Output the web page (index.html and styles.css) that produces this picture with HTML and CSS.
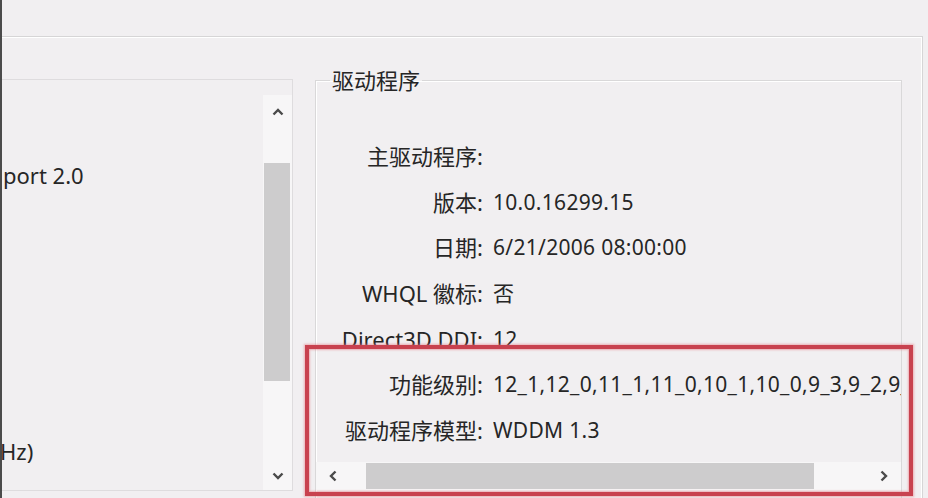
FILE: index.html
```html
<!DOCTYPE html>
<html lang="zh-CN">
<head>
<meta charset="utf-8">
<title>驱动程序</title>
<link rel="stylesheet" href="styles.css">
</head>
<body>
<div class="window">
  <div class="topbar"></div>
  <div class="panel">
    <div class="list">
      <div class="list-content">
        <div class="line">port 2.0</div>
        <div class="line"></div>
        <div class="line"></div>
        <div class="line"></div>
        <div class="line"></div>
        <div class="line"></div>
        <div class="line cut">Hz)</div>
      </div>
      <div class="vscroll">
        <div class="vbtn up"><svg width="12" height="8" viewBox="0 0 12 8"><polyline points="1.5,6.5 6,2 10.5,6.5" fill="none" stroke="#4a4a4a" stroke-width="2.4"/></svg></div>
        <div class="vtrack"><div class="vthumb"></div></div>
        <div class="vbtn down"><svg width="12" height="8" viewBox="0 0 12 8"><polyline points="1.5,1.5 6,6 10.5,1.5" fill="none" stroke="#4a4a4a" stroke-width="2.4"/></svg></div>
      </div>
    </div>
    <fieldset class="group">
      <legend>驱动程序</legend>
      <div class="rows">
        <div class="label">主驱动程序:</div><div class="value"></div>
        <div class="label">版本:</div><div class="value">10.0.16299.15</div>
        <div class="label">日期:</div><div class="value">6/21/2006 08:00:00</div>
        <div class="label">WHQL 徽标:</div><div class="value">否</div>
        <div class="label">Direct3D DDI:</div><div class="value">12</div>
        <div class="label">功能级别:</div><div class="value">12_1,12_0,11_1,11_0,10_1,10_0,9_3,9_2,9_1</div>
        <div class="label">驱动程序模型:</div><div class="value">WDDM 1.3</div>
      </div>
      <div class="hscroll">
        <div class="hbtn"><svg width="8" height="12" viewBox="0 0 8 12"><polyline points="6.5,1.5 2,6 6.5,10.5" fill="none" stroke="#4a4a4a" stroke-width="2.4"/></svg></div>
        <div class="htrack"><div class="hthumb"></div></div>
        <div class="hbtn"><svg width="8" height="12" viewBox="0 0 8 12"><polyline points="1.5,1.5 6,6 1.5,10.5" fill="none" stroke="#4a4a4a" stroke-width="2.4"/></svg></div>
      </div>
    </fieldset>
  </div>
  <div class="highlight"></div>
</div>
</body>
</html>
```

FILE: styles.css
```css
* { box-sizing: border-box; }
html, body { margin: 0; padding: 0; }
body {
  width: 928px;
  height: 498px;
  overflow: hidden;
  background: #f1eff1;
  font-family: "Noto Sans", "Noto Sans CJK SC", sans-serif;
  font-size: 22px;
  color: #262626;
}
.window {
  position: relative;
  height: 498px;
  border-left: 2px solid #4b4b4b;
  display: flex;
  flex-direction: column;
  overflow: hidden;
}
.topbar { height: 36px; flex: none; }
.panel {
  flex: 1;
  display: flex;
  align-items: flex-start;
  gap: 22px;
  margin-right: 5px;
  padding-top: 31px;
  border-top: 1px solid #d6d5d6;
  border-right: 1px solid #d6d5d6;
  box-shadow: inset 0 1px 0 #ffffff, inset -1px 0 0 #ffffff;
}
.list {
  flex: none;
  width: 291px;
  height: 412px;
  margin-top: 11px;
  padding-top: 15px;
  border-top: 1px solid #dedcde;
  border-right: 1px solid #dedcde;
  border-bottom: 1px solid #dedcde;
  display: flex;
}
.list-content {
  flex: 1;
  overflow: hidden;
  padding-top: 57px;
  white-space: nowrap;
}
.line { height: 46px; line-height: 46px; padding-left: 1px; }
.line.cut { margin-left: -3px; }
.vscroll {
  width: 29px;
  background: #f7f6f7;
  display: flex;
  flex-direction: column;
}
.vbtn { display: flex; align-items: center; justify-content: center; flex: none; }
.vbtn.up { height: 33px; }
.vbtn.down { height: 28px; }
.vtrack { flex: 1; padding: 35px 2px 0 1px; }
.vthumb { height: 218px; background: #cdcccd; }
.group {
  flex: none;
  width: 587px;
  height: 520px;
  margin: 0;
  padding: 0;
  min-width: 0;
  border: 1px solid #d9d8d9;
  box-shadow: inset 1px 1px 0 #ffffff;
}
.group legend {
  margin-left: 14px;
  padding: 0 2px;
  line-height: 24px;
}
.rows {
  display: grid;
  grid-template-columns: 167px minmax(0, 1fr);
  column-gap: 10px;
  padding-top: 42px;
  line-height: 45.67px;
  white-space: nowrap;
}
.label { text-align: right; }
.value { overflow: hidden; font-size: 21px; letter-spacing: 0.3px; }
.hscroll {
  margin-top: 8px;
  height: 28px;
  display: flex;
  background: #f7f6f7;
}
.hbtn { width: 34px; flex: none; display: flex; align-items: center; justify-content: center; }
.htrack { flex: 1; padding: 1px 0 1px 16px; }
.hthumb { width: 448px; height: 100%; background: #cdcccd; }
.highlight {
  position: absolute;
  left: 303px;
  top: 345px;
  width: 608px;
  height: 151px;
  border: 4px solid #c8424f;
  box-shadow: 0 0 2px 1px rgba(230, 120, 130, 0.55), inset 0 0 2px 1px rgba(230, 120, 130, 0.55);
}
```
